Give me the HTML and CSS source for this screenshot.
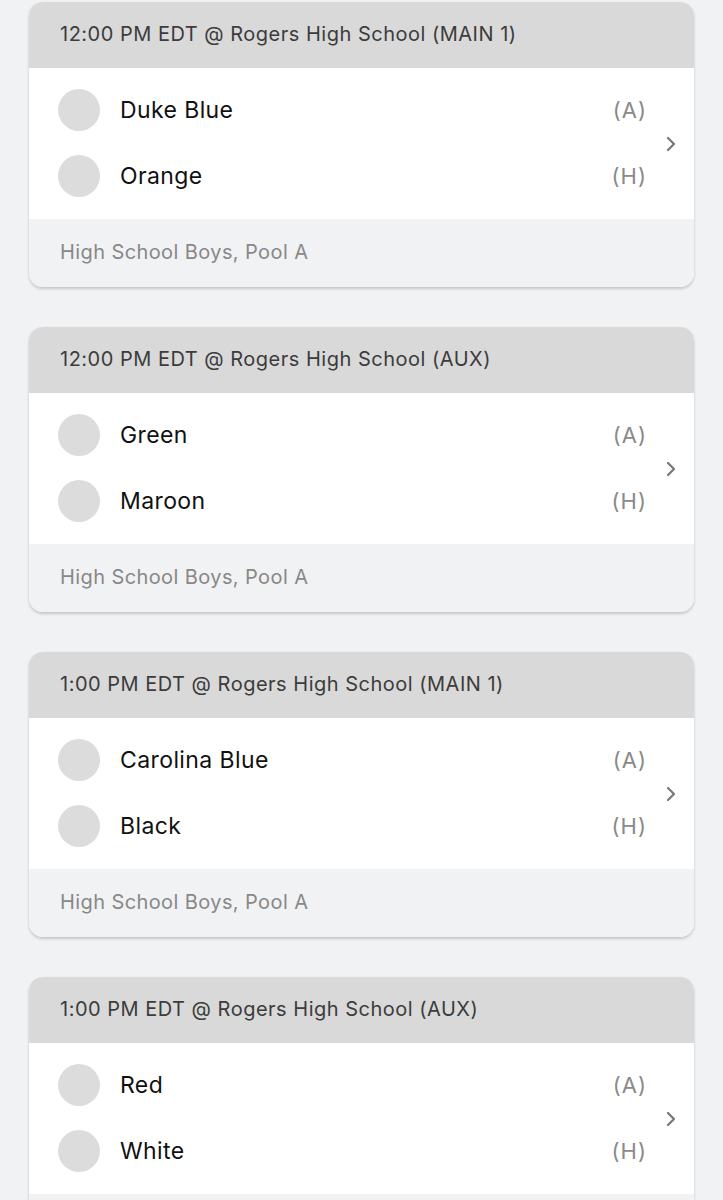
FILE: index.html
```html
<!DOCTYPE html>
<html>
<head>
<meta charset="utf-8">
<link rel="stylesheet" href="styles.css">
</head>
<body>
<div class="list">
  <div class="card">
    <div class="card-head">12:00 PM EDT @ Rogers High School (MAIN 1)</div>
    <div class="card-body">
      <div class="teams">
        <div class="team"><span class="avatar"></span><span class="name">Duke Blue</span><span class="side">(A)</span></div>
        <div class="team"><span class="avatar"></span><span class="name">Orange</span><span class="side">(H)</span></div>
      </div>
      <svg class="chev" width="14" height="18" viewBox="0 0 14 18"><path d="M4 3 L10 9 L4 15" fill="none" stroke="#777777" stroke-width="2.2" stroke-linecap="round" stroke-linejoin="round"/></svg>
    </div>
    <div class="card-foot">High School Boys, Pool A</div>
  </div>
  <div class="card">
    <div class="card-head">12:00 PM EDT @ Rogers High School (AUX)</div>
    <div class="card-body">
      <div class="teams">
        <div class="team"><span class="avatar"></span><span class="name">Green</span><span class="side">(A)</span></div>
        <div class="team"><span class="avatar"></span><span class="name">Maroon</span><span class="side">(H)</span></div>
      </div>
      <svg class="chev" width="14" height="18" viewBox="0 0 14 18"><path d="M4 3 L10 9 L4 15" fill="none" stroke="#777777" stroke-width="2.2" stroke-linecap="round" stroke-linejoin="round"/></svg>
    </div>
    <div class="card-foot">High School Boys, Pool A</div>
  </div>
  <div class="card">
    <div class="card-head">1:00 PM EDT @ Rogers High School (MAIN 1)</div>
    <div class="card-body">
      <div class="teams">
        <div class="team"><span class="avatar"></span><span class="name">Carolina Blue</span><span class="side">(A)</span></div>
        <div class="team"><span class="avatar"></span><span class="name">Black</span><span class="side">(H)</span></div>
      </div>
      <svg class="chev" width="14" height="18" viewBox="0 0 14 18"><path d="M4 3 L10 9 L4 15" fill="none" stroke="#777777" stroke-width="2.2" stroke-linecap="round" stroke-linejoin="round"/></svg>
    </div>
    <div class="card-foot">High School Boys, Pool A</div>
  </div>
  <div class="card">
    <div class="card-head">1:00 PM EDT @ Rogers High School (AUX)</div>
    <div class="card-body">
      <div class="teams">
        <div class="team"><span class="avatar"></span><span class="name">Red</span><span class="side">(A)</span></div>
        <div class="team"><span class="avatar"></span><span class="name">White</span><span class="side">(H)</span></div>
      </div>
      <svg class="chev" width="14" height="18" viewBox="0 0 14 18"><path d="M4 3 L10 9 L4 15" fill="none" stroke="#777777" stroke-width="2.2" stroke-linecap="round" stroke-linejoin="round"/></svg>
    </div>
    <div class="card-foot">High School Boys, Pool A</div>
  </div>
</div>
</body>
</html>
```
FILE: styles.css
```css
html, body {
  margin: 0;
  padding: 0;
  background: #f1f2f4;
  font-family: "Inter", "Noto Sans", sans-serif;
}
.list {
  display: flex;
  flex-direction: column;
  gap: 40px;
  padding: 2px 29px 40px 29px;
}
.card {
  background: #ffffff;
  border-radius: 14px;
  overflow: hidden;
  box-shadow: 0 2px 3px rgba(0,0,0,0.18), 0 0 1px rgba(0,0,0,0.08);
}
.card-head {
  background: #d9d9d9;
  height: 66px;
  box-sizing: border-box;
  padding-bottom: 3px;
  display: flex;
  align-items: center;
  padding-left: 31px;
  font-size: 20px;
  color: #3c3c3c;
  letter-spacing: 0.5px;
}
.card-body {
  display: flex;
  align-items: center;
  padding: 9px 0 10px 0;
}
.teams {
  flex: 1;
  display: flex;
  flex-direction: column;
}
.team {
  height: 66px;
  display: flex;
  align-items: center;
  padding-left: 29px;
}
.avatar {
  width: 42px;
  height: 42px;
  border-radius: 50%;
  background: #dcdcdc;
  flex: none;
}
.name {
  margin-left: 20px;
  flex: 1;
  font-size: 23px;
  color: #111111;
  letter-spacing: 0.4px;
}
.side {
  font-size: 22px;
  color: #8a8a8a;
  letter-spacing: 1px;
  margin-right: 1px;
}
.chev {
  margin: 2px 16px 0 16px;
  flex: none;
}
.card-foot {
  background: #f1f2f4;
  height: 68px;
  box-sizing: border-box;
  padding-bottom: 3px;
  display: flex;
  align-items: center;
  padding-left: 31px;
  font-size: 20px;
  color: #888888;
  letter-spacing: 0.4px;
}
```
